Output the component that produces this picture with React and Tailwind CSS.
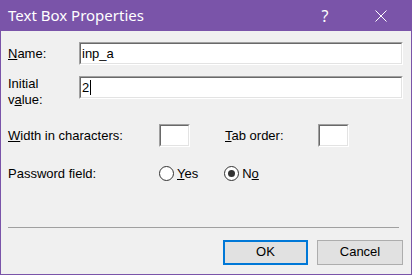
import React from "react";

function Sunken({ className, children }) {
  return (
    <div className={`border-t border-l border-t-[#a0a0a0] border-l-[#a0a0a0] border-b border-r border-b-white border-r-white ${className}`}>
      <div className="w-full h-full bg-white border-t border-l border-t-[#696969] border-l-[#696969] border-b border-r border-b-[#e3e3e3] border-r-[#e3e3e3] flex items-center pl-[1px] text-[13px] leading-none">
        {children}
      </div>
    </div>
  );
}

function Radio({ checked, label }) {
  return (
    <div className="flex items-center gap-[3px]">
      <div className="w-[15px] h-[15px] rounded-full border border-[#333] bg-white flex items-center justify-center">
        {checked && <div className="w-[7px] h-[7px] rounded-full bg-[#333]" />}
      </div>
      <span>{label}</span>
    </div>
  );
}

export default function App() {
  return (
    <div
      className="w-[412px] h-[275px] flex flex-col bg-[#f0f0f0] border-x border-b border-[#7a54a9] text-black"
      style={{ fontFamily: '"Liberation Sans", Arial, sans-serif' }}
    >
      {/* title bar */}
      <div className="h-[31px] -mx-px bg-[#7a54a9] flex items-center text-white">
        <span className="pl-[8px] text-[15px] flex-1" style={{ fontFamily: '"Segoe UI", "Noto Sans", sans-serif' }}>
          Text Box Properties
        </span>
        <span className="w-[46px] text-center text-[16px]" style={{ fontFamily: '"Noto Sans", sans-serif' }}>?</span>
        <div className="w-[46px] h-full flex items-center justify-center ml-[10px]">
          <svg width="12" height="12" viewBox="0 0 12 12">
            <path d="M0.5 0.5 L11.5 11.5 M11.5 0.5 L0.5 11.5" stroke="white" strokeWidth="1" />
          </svg>
        </div>
        <div className="w-[8px]" />
      </div>

      <div className="flex-1 flex flex-col pl-[7px] pr-[8px] text-[13px]">
        <div className="flex items-center mt-[11px]">
          <span className="w-[71px]"><u>N</u>ame:</span>
          <Sunken className="w-[324px] h-[23px]">inp_a</Sunken>
        </div>

        <div className="flex items-start h-[23px] mt-[11px]">
          <span className="w-[71px] leading-[16px]">
            Initial<br />v<u>a</u>lue:
          </span>
          <Sunken className="w-[324px] h-[23px]">
            2<span className="inline-block w-px h-[15px] bg-black ml-[1px]" />
          </Sunken>
        </div>

        <div className="flex items-center mt-[25px]">
          <span className="w-[151px]"><u>W</u>idth in characters:</span>
          <Sunken className="w-[31px] h-[23px]" />
          <span className="ml-[35px] w-[93px]"><u>T</u>ab order:</span>
          <Sunken className="w-[31px] h-[23px]" />
        </div>

        <div className="flex items-center mt-[17px]">
          <span className="w-[151px]">Password field:</span>
          <Radio label={<><u>Y</u>es</>} />
          <div className="ml-[26px]">
            <Radio checked label={<>N<u>o</u></>} />
          </div>
        </div>

        <div className="mt-[43px] w-[391px] h-px bg-[#a0a0a0]" />

        <div className="flex justify-end gap-[9px] mt-[12px]">
          <button className="w-[85px] h-[25px] border-2 border-[#0078d7] bg-[#e1e1e1] text-[13px]">OK</button>
          <button className="w-[86px] h-[25px] border border-[#adadad] bg-[#e1e1e1] text-[13px]">Cancel</button>
        </div>
      </div>
    </div>
  );
}
